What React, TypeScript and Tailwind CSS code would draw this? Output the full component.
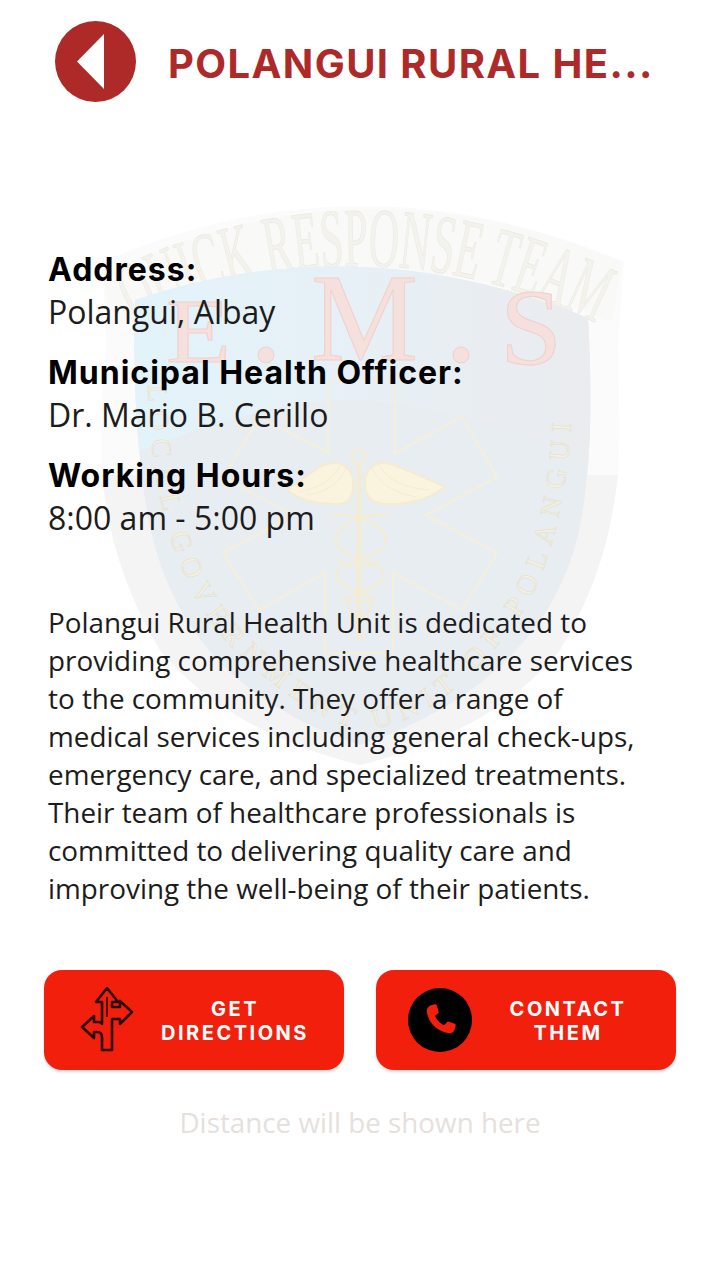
import React from "react";

const rimPath =
  "M103 262 Q360 150 624 262 L618 345 C620 420 620 470 616 490 C608 550 590 600 560 650 C510 710 440 745 360 765 C280 745 210 710 160 650 C130 600 112 550 104 490 C100 470 100 420 106 340Z";

const Watermark = () => (
  <svg className="absolute left-0 top-0 w-[720px] h-[800px]" viewBox="0 0 720 800" aria-hidden="true">
    <defs>
      <path id="topArc" d="M134 322 Q360 210 594 322" fill="none" />
      <path id="ringArc" d="M148 385 C150 480 170 580 230 645 C280 695 330 725 365 730 C420 725 480 680 530 600 C560 540 572 460 572 385" fill="none" />
      <clipPath id="shieldClip">
        <path d="M135 300 Q360 225 588 318 C594 420 590 520 565 575 C530 660 450 715 360 745 C270 715 190 660 158 557 C140 500 132 400 135 300Z" />
      </clipPath>
      <clipPath id="lowerClip">
        <rect x="0" y="475" width="720" height="325" />
      </clipPath>
      <linearGradient id="skyFill" x1="0" y1="0" x2="1" y2="0">
        <stop offset="0" stopColor="#e2f3fa" />
        <stop offset="0.4" stopColor="#e6f1f7" />
        <stop offset="0.75" stopColor="#e9edf1" />
        <stop offset="1" stopColor="#eaecef" />
      </linearGradient>
    </defs>
    {/* outer rim */}
    <path d={rimPath} fill="#fbfbfb" />
    <path d={rimPath} fill="#f4f4f5" clipPath="url(#lowerClip)" />
    {/* banner */}
    <path d="M103 275 Q360 150 622 262 L612 322 Q360 215 112 328Z" fill="#f9f9f7" />
    <text fontFamily="'Liberation Serif', serif" fontSize="84" fill="#f3f2ec" stroke="#e9e8df" strokeWidth="0.7">
      <textPath href="#topArc" textLength="480" lengthAdjust="spacingAndGlyphs">QUICK RESPONSE TEAM</textPath>
    </text>
    {/* shield */}
    <g clipPath="url(#shieldClip)">
      <rect x="120" y="230" width="490" height="530" fill="#e8edf1" />
      <path d="M120 230 H610 V474 Q450 395 330 400 Q225 412 120 460Z" fill="url(#skyFill)" />
    </g>
    {/* E.M.S */}
    <g fontFamily="'Liberation Serif', serif" fill="#f5e0dd" stroke="#f0d0cb" strokeWidth="1">
      <text x="166" y="362" fontSize="91" textLength="65" lengthAdjust="spacingAndGlyphs">E</text>
      <circle cx="266" cy="355" r="8" />
      <text x="311" y="360" fontSize="124" textLength="107" lengthAdjust="spacingAndGlyphs">M</text>
      <circle cx="461" cy="355" r="8" />
      <text x="500" y="364" fontSize="108" textLength="62" lengthAdjust="spacingAndGlyphs">S</text>
    </g>
    {/* star of life */}
    <path
      d="M328 380 V453 L260 417 L223 477 L293 515 L223 553 L259 610 L325 573 V653 H393 V573 L462 610 L497 553 L426 515 L497 477 L462 417 L395 453 V380Z"
      fill="none"
      stroke="#f5efd9"
      strokeWidth="2"
    />
    {/* caduceus */}
    <g fill="none" stroke="#f5ecd0" strokeWidth="2">
      <circle cx="359" cy="457" r="7" />
      <path d="M359 464 V640" strokeWidth="4" />
      <path d="M353 480 C350 463 335 460 322 466 C310 472 300 482 287 490 C300 500 320 505 340 504 C350 503 354 495 353 480Z" fill="#faf4df" />
      <path d="M365 480 C368 463 383 460 396 466 C412 472 430 480 445 487 C430 498 410 505 385 504 C370 503 364 495 365 480Z" fill="#faf4df" />
      <path d="M346 468 C340 482 328 492 306 495 M340 466 C332 480 320 488 298 492 M372 468 C378 482 392 492 416 497 M380 466 C388 480 404 488 430 490" strokeWidth="1" />
      <path d="M331 518 C345 508 390 525 386 542 C380 562 336 558 336 576 C340 592 376 590 372 606 C368 620 350 616 359 634" />
      <path d="M390 518 C375 508 332 525 336 542 C342 562 384 558 384 576 C380 592 344 590 348 606 C352 620 368 616 359 634" />
      <path d="M338 560 C348 570 372 568 380 560 M342 596 C350 604 368 604 376 596" strokeWidth="1.500" />
    </g>
    {/* ring text */}
    <text fontFamily="'Liberation Serif', serif" fontSize="28" fill="#f4f1e4" stroke="#e6e2d0" strokeWidth="0.7">
      <textPath href="#ringArc" textLength="840">LOCAL GOVERNMENT UNIT OF POLANGUI</textPath>
    </text>
  </svg>
);

const DirectionsIcon = () => (
  <svg width="54" height="66" viewBox="0 0 54 66" className="shrink-0" aria-hidden="true">
    <path
      d="M22 63 H32 V32 H40 V37 L52 25 L40 14 V20 H32 V15 H38 L27 1 L16 15 H22 V37 Q21 35 18 35 H14 V29 L2 40 L14 51 V45 H17 Q22 45 22 50 Z"
      fill="none"
      stroke="#2a0805"
      strokeWidth="2.600"
      strokeLinejoin="round"
    />
    <path d="M27 10 V30" stroke="#2a0805" strokeWidth="1.600" />
  </svg>
);

const PhoneIcon = () => (
  <span className="flex h-16 w-16 shrink-0 items-center justify-center rounded-full bg-black">
    <svg width="40" height="40" viewBox="0 0 24 24" aria-hidden="true">
      <path
        d="M6.600 3.200 8.900 2.600c.6-.1 1 .2 1.200.7l1.100 3.600c.1.500 0 .9-.4 1.200L9 9.500c.8 2.200 3 4.600 5.400 5.600l1.800-1.800c.4-.3.8-.4 1.200-.3l3.400 1.200c.5.2.8.7.6 1.200l-.7 2.400c-.5 1.500-1.700 2.300-3.100 2.100C10.300 19 4.800 13.400 4.100 7c-.2-1.700.9-3.300 2.500-3.800Z"
        fill="#f21f0c"
      />
    </svg>
  </span>
);

const Info = ({ label, value }: { label: string; value: string }) => (
  <div className="mb-[19px]">
    <div className="font-['Inter',sans-serif] text-[32px] font-bold leading-[45px] tracking-[1px] text-black">{label}</div>
    <div className="font-['Open_Sans',sans-serif] text-[32px] leading-[39px] text-[#1c1c1c]">{value}</div>
  </div>
);

const ActionButton = ({ icon, lines, pad }: { icon: React.ReactNode; lines: string[]; pad: string }) => (
  <button className={`flex h-[100px] w-[300px] items-center rounded-[18px] bg-[#f21f0c] shadow-[0_2px_3px_rgba(0,0,0,0.15)] ${pad}`}>
    {icon}
    <span className="flex-1 pt-[2px] text-center font-['Inter',sans-serif] text-[20px] font-bold leading-[24px] tracking-[2.500px] text-white">
      {lines.map((l) => (
        <span key={l} className="block">{l}</span>
      ))}
    </span>
  </button>
);

export default function App() {
  return (
    <div className="relative h-[1280px] w-[720px] overflow-hidden bg-white">
      <Watermark />
      <div className="relative flex flex-col">
        <header className="flex h-[122px] items-center pl-[55px]">
          <span className="flex h-[81px] w-[81px] shrink-0 items-center justify-center rounded-full bg-[#ad2a29]">
            <svg width="81" height="81" viewBox="0 0 81 81" aria-hidden="true">
              <path d="M22 40.500 L49 13 V68 Z" fill="#fff" />
            </svg>
          </span>
          <h1 className="ml-[32px] whitespace-nowrap pt-[6px] font-['Inter',sans-serif] text-[40px] font-bold leading-none tracking-[1.400px] text-[#ad2a29]">
            POLANGUI RURAL HE...
          </h1>
        </header>
        <section className="mt-[125px] pl-[48px]">
          <Info label="Address:" value="Polangui, Albay" />
          <Info label="Municipal Health Officer:" value="Dr. Mario B. Cerillo" />
          <Info label="Working Hours:" value="8:00 am - 5:00 pm" />
        </section>
        <p className="mt-[47px] whitespace-nowrap pl-[48px] font-['Open_Sans',sans-serif] text-[27.850px] leading-[38px] text-[#1c1c1c]">
          Polangui Rural Health Unit is dedicated to
          <br />
          providing comprehensive healthcare services
          <br />
          to the community. They offer a range of
          <br />
          medical services including general check-ups,
          <br />
          emergency care, and specialized treatments.
          <br />
          Their team of healthcare professionals is
          <br />
          committed to delivering quality care and
          <br />
          improving the well-being of their patients.
        </p>
        <div className="mt-[63px] flex justify-between px-[44px]">
          <ActionButton icon={<DirectionsIcon />} lines={["GET", "DIRECTIONS"]} pad="pl-[36px] pr-[8px]" />
          <ActionButton icon={<PhoneIcon />} lines={["CONTACT", "THEM"]} pad="pl-[32px] pr-[12px]" />
        </div>
        <div className="mt-[33px] text-center font-['Open_Sans',sans-serif] text-[27.800px] leading-[38px] text-[#e6dfdc]">
          Distance will be shown here
        </div>
      </div>
    </div>
  );
}
